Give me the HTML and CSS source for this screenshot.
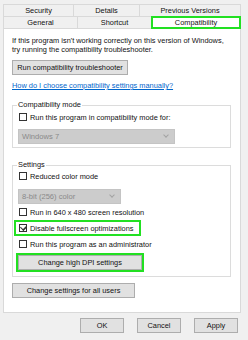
FILE: index.html
```html
<!DOCTYPE html>
<html lang="en">
<head>
  <meta charset="UTF-8">
  <title>Properties</title>
  <link rel="stylesheet" href="styles.css">
</head>
<body>

<div class="dialog">
  <div class="tabs">
    <div class="tab-row">
      <div class="tab tab-security">Security</div>
      <div class="tab tab-details">Details</div>
      <div class="tab tab-versions">Previous Versions</div>
    </div>
    <div class="tab-row">
      <div class="tab tab-general">General</div>
      <div class="tab tab-shortcut">Shortcut</div>
      <div class="tab tab-compat active">Compatibility</div>
    </div>
  </div>

  <div class="panel">
    <p class="intro">If this program isn't working correctly on this version of Windows,<br>try running the compatibility troubleshooter.</p>
    <div class="btn btn-troubleshoot">Run compatibility troubleshooter</div>
    <a class="link" href="#">How do I choose compatibility settings manually?</a>

    <fieldset class="group group-mode">
      <legend>Compatibility mode</legend>
      <label class="check"><span class="box"></span>Run this program in compatibility mode for:</label>
      <div class="select select-os">Windows 7<span class="caret"></span></div>
    </fieldset>

    <fieldset class="group group-settings">
      <legend>Settings</legend>
      <label class="check check-first"><span class="box"></span>Reduced color mode</label>
      <div class="select select-color">8-bit (256) color<span class="caret"></span></div>
      <label class="check check-res"><span class="box"></span>Run in 640 x 480 screen resolution</label>
      <label class="check check-mark highlight"><span class="box checked"></span>Disable fullscreen optimizations</label>
      <label class="check check-admin"><span class="box"></span>Run this program as an administrator</label>
      <div class="btn btn-dpi highlight">Change high DPI settings</div>
    </fieldset>

    <div class="btn btn-all">Change settings for all users</div>
  </div>

  <div class="footer">
    <div class="btn btn-foot">OK</div>
    <div class="btn btn-foot">Cancel</div>
    <div class="btn btn-foot">Apply</div>
  </div>
</div>

</body>
</html>
```

FILE: styles.css
```css
* {
  box-sizing: border-box;
  margin: 0;
  padding: 0;
}
body {
  background: #f0f0f0;
  font-family: "Liberation Sans", Arial, sans-serif;
  font-size: 7.4px;
  color: #111;
}
.dialog {
  width: 248px;
  height: 340px;
  padding: 4px 7px 0 3px;
  display: flex;
  flex-direction: column;
}

/* tabs */
.tab-row {
  display: flex;
  height: 12px;
}
.tab {
  border: 1px solid #d9d9d9;
  border-bottom: 0;
  margin-right: -1px;
  background: #f0f0f0;
  text-align: center;
  line-height: 11px;
}
.tab-security { width: 71px; }
.tab-details { width: 67px; }
.tab-versions { width: 102px; }
.tab-general { width: 75px; }
.tab-shortcut { width: 75px; }
.tab-compat { width: 90px; }
.tab.active {
  background: #fff;
  border: 2px solid #22e022;
  line-height: 9px;
  height: 13px;
  position: relative;
  z-index: 1;
}

/* panel */
.panel {
  background: #fff;
  border: 1px solid #d9d9d9;
  height: 285px;
  padding: 7px 10px 0 8px;
  display: flex;
  flex-direction: column;
  align-items: flex-start;
}
.intro {
  line-height: 9px;
}
.btn {
  background: #e1e1e1;
  border: 1px solid #adadad;
  text-align: center;
  height: 15px;
  line-height: 13px;
}
.btn-troubleshoot {
  width: 116px;
  margin-top: 6px;
}
.link {
  color: #0066cc;
  margin-top: 6px;
  line-height: 9px;
}

.group {
  width: 219px;
  border: 1px solid #dcdcdc;
  padding: 0 5px 4px 5px;
  display: flex;
  flex-direction: column;
  align-items: flex-start;
}
.group legend {
  padding: 0 1px;
  margin-left: -1px;
  line-height: 8px;
}
.group-mode {
  margin-top: 11px;
  padding-bottom: 3px;
}
.group-settings {
  margin-top: 13px;
  padding-bottom: 6px;
}

.check {
  display: flex;
  align-items: center;
  height: 12px;
  margin-top: 2px;
  padding-left: 1px;
}
.box {
  width: 8px;
  height: 8px;
  border: 1px solid #333;
  background: #fff;
  margin-right: 3px;
  position: relative;
}
.box.checked::after {
  content: "";
  position: absolute;
  left: 1px;
  top: 0;
  width: 4px;
  height: 2px;
  border-left: 1px solid #333;
  border-bottom: 1px solid #333;
  transform: translate(0, 1px) rotate(-45deg) scaleY(1.6);
}

.select {
  position: relative;
  height: 15px;
  background: #cccccc;
  border: 1px solid #c4c4c4;
  color: #8a8a8a;
  line-height: 13px;
  padding-left: 3px;
  font-size: 7.6px;
}
.select-os {
  width: 157px;
  margin-top: 6px;
}
.select-color {
  width: 103px;
  margin-top: 7px;
}
.caret {
  position: absolute;
  right: 6px;
  top: 3px;
  width: 4px;
  height: 4px;
  border-right: 1px solid #a3a3a3;
  border-bottom: 1px solid #a3a3a3;
  transform: rotate(45deg);
}

.highlight {
  outline: 2px solid #22e022;
}
.check-first {
  margin-top: 1px;
}
.check-res {
  margin-top: 2px;
}
.check-mark {
  margin-top: 4px;
  width: 123px;
  margin-left: -2px;
  padding-left: 3px;
}
.check-admin {
  margin-top: 4px;
}
.btn-dpi {
  width: 124px;
  margin-top: 5px;
}
.btn-all {
  width: 123px;
  margin-top: 6px;
}

/* footer */
.footer {
  display: flex;
  justify-content: flex-end;
  gap: 13px;
  padding-top: 5px;
  padding-right: 3px;
}
.btn-foot {
  width: 44px;
}
```
